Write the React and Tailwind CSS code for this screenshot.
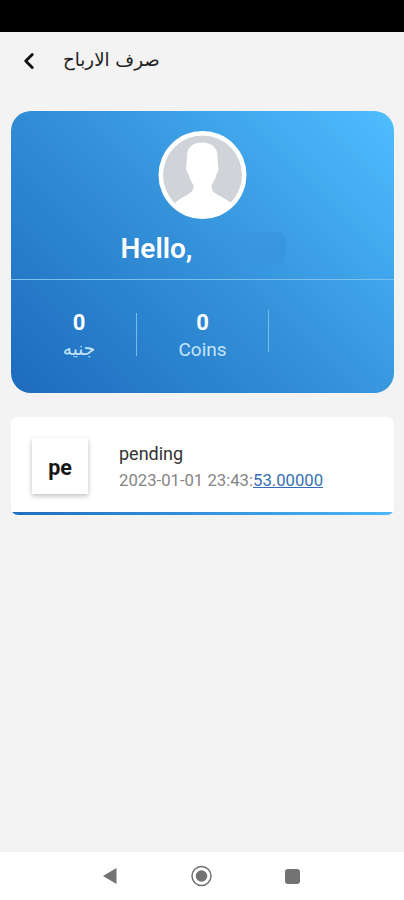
import { ChevronLeft } from "lucide-react";

const payments = [
  {
    id: 1,
    status: "pending",
    date: "2023-01-01 23:43:",
    fraction: "53.00000",
  },
];

function Header() {
  return (
    <header className="flex h-[78.5px] items-start pl-4">
      <button className="mt-4 flex h-[26px] w-[26px] items-center justify-center">
        <ChevronLeft className="h-[26px] w-[26px] text-[#111]" strokeWidth={2.7} />
      </button>
      <h1
        dir="rtl"
        className="ml-[21px] mt-[13px] text-[18.2px] leading-[30px] whitespace-nowrap text-[#222] font-['DejaVu_Sans',sans-serif]"
      >
        صرف الارباح
      </h1>
    </header>
  );
}

function Avatar() {
  return (
    <svg className="h-[88px] w-[88px] overflow-visible" viewBox="0 0 88 88">
      <circle cx="43.5" cy="44" r="44" fill="#fff" />
      <circle cx="43.5" cy="44" r="39.5" fill="#d0d3d8" />
      <path
        d="M43 11.500C33 11.500 28 17 28 25L27.500 34C26.500 37 27.500 41 29.500 43C30.500 48 32.500 51 34.500 54C34.500 58 34 60 31 62C27 65 21 67 16 72C23 81 33 85 44 85S65 81 72 72C66 67 60 65 56 62C53 60 52.500 58 52.500 54C54.500 51 56.500 48 57.500 43C59.500 41 60 37 59 34L58.500 25C58.500 17 53 11.500 43 11.500Z"
        fill="#fff"
      />
    </svg>
  );
}

function ProfileCard() {
  return (
    <section className="mx-[11px] h-[282px] w-[383px] overflow-hidden rounded-[20px] bg-linear-[45deg,#1d6bbd_0%,#3390d8_48%,#4fbdff_100%] text-white">
      <div className="flex h-[168px] flex-col items-center pt-[20px]">
        <Avatar />
        <div className="mt-[13.5px] flex h-8 w-[166px] items-center rounded-lg bg-linear-to-r from-transparent from-50% to-[#3793de]/70 pl-px">
          <h2 className="pt-px text-[28px] leading-8 font-semibold">Hello,</h2>
        </div>
      </div>
      <div className="h-px bg-[#7cc0f0]" />
      <div className="flex h-[112px] pt-[29.5px]">
        <div className="flex w-[125px] flex-col items-center pl-[11px]">
          <span className="text-[22px] leading-7 font-bold">0</span>
          <span
            dir="rtl"
            className="-mt-px text-[18.5px] leading-[26px] text-[#c5e5fa] font-['DejaVu_Sans',sans-serif]"
          >
            جنيه
          </span>
        </div>
        <div className="mt-1 h-[43px] w-px bg-[#78b9e8]" />
        <div className="flex w-[131px] flex-col items-center">
          <span className="text-[22px] leading-7 font-bold">0</span>
          <span className="text-[19px] leading-[26px] text-[#c5e5fa]">Coins</span>
        </div>
        <div className="mt-px h-[42px] w-px bg-[#78b9e8]" />
      </div>
    </section>
  );
}

function PaymentItem({ item }) {
  return (
    <article className="mx-[11px] mt-[24.5px] h-[98px] w-[383px] overflow-hidden rounded-[7px] bg-white">
      <div className="flex h-[95px] pl-[21px]">
        <div className="mt-[21px] flex h-[56px] w-[56px] items-center justify-center bg-white pt-1 text-[21.5px] font-bold text-[#151515] shadow-[0_2px_5px_rgba(0,0,0,0.26)]">
          {item.status.slice(0, 2)}
        </div>
        <div className="ml-[31px] pt-6">
          <p className="text-[18px] leading-[26px] text-[#333]">{item.status}</p>
          <p className="text-[16.7px] leading-[27px] whitespace-nowrap text-[#858585]">
            {item.date}
            <span className="text-[#356fb2] underline">{item.fraction}</span>
          </p>
        </div>
      </div>
      <div className="h-[3px] bg-linear-to-r from-[#1f6fbf] to-[#4db5f8]" />
    </article>
  );
}

function NavigationBar() {
  return (
    <nav className="flex h-[48px] items-center justify-between bg-white pr-[104px] pl-[102px]">
      <svg className="h-4 w-4" viewBox="0 0 16 16" fill="#737373">
        <path d="M1 8L14.500 0V16Z" />
      </svg>
      <svg className="h-[22px] w-[22px]" viewBox="0 0 22 22">
        <circle cx="10.500" cy="11" r="9.500" fill="none" stroke="#737373" strokeWidth="1.500" />
        <circle cx="10.500" cy="11" r="5.800" fill="#737373" />
      </svg>
      <div className="h-[15px] w-[15px] rounded-[3px] bg-[#737373]" />
    </nav>
  );
}

export default function App() {
  return (
    <div className="flex h-[900px] w-[404px] flex-col overflow-hidden bg-[#f3f3f3] font-['Roboto',sans-serif]">
      <div className="h-8 shrink-0 bg-black" />
      <Header />
      <main className="grow">
        <ProfileCard />
        {payments.map((item) => (
          <PaymentItem key={item.id} item={item} />
        ))}
      </main>
      <NavigationBar />
    </div>
  );
}
